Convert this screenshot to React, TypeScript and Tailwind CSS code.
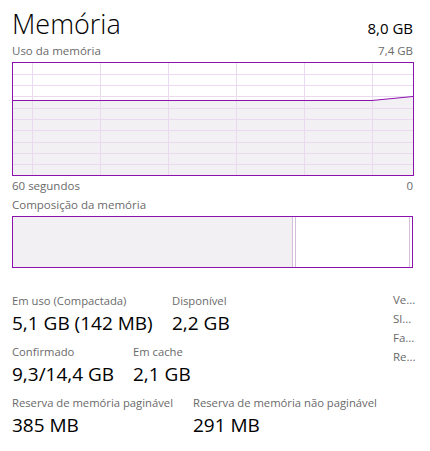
import React from 'react';

const font = { fontFamily: '"Open Sans", "Noto Sans", sans-serif' };

const vLines = [20, 88, 156, 224, 292, 360];
const hLines = [12, 23, 34, 46, 57, 68, 80, 91, 102];

const Grafico: React.FC = () => (
    <svg width="402" height="114" viewBox="0 0 402 114" className="block">
        <rect x="0" y="0" width="402" height="114" fill="#ffffff" />
        <polygon points="0,38.5 360,38.5 401,34.5 401,114 0,114" fill="#f3f0f4" />
        {vLines.map((x) => (
            <line key={'v' + x} x1={x + 0.5} y1="0" x2={x + 0.5} y2="114" stroke="#ead9ef" strokeWidth="1" />
        ))}
        {hLines.map((y) => (
            <line key={'h' + y} x1="0" y1={y + 0.5} x2="402" y2={y + 0.5} stroke="#ead9ef" strokeWidth="1" />
        ))}
        <polyline points="0,38.5 360,38.5 401,34.5" fill="none" stroke="#8b12ae" strokeWidth="1" />
        <rect x="0.5" y="0.5" width="401" height="113" fill="none" stroke="#8b12ae" strokeWidth="1" />
    </svg>
);

interface Stat {
    label: string;
    value: string;
    w: string;
}

const linha1: Stat[] = [
    { label: 'Em uso (Compactada)', value: '5,1 GB (142 MB)', w: 'w-[160px]' },
    { label: 'Disponível', value: '2,2 GB', w: 'w-[100px]' },
];
const linha2: Stat[] = [
    { label: 'Confirmado', value: '9,3/14,4 GB', w: 'w-[121px]' },
    { label: 'Em cache', value: '2,1 GB', w: 'w-[100px]' },
];
const linha3: Stat[] = [
    { label: 'Reserva de memória paginável', value: '385 MB', w: 'w-[181px]' },
    { label: 'Reserva de memória não paginável', value: '291 MB', w: 'w-[200px]' },
];

const Linha: React.FC<{ itens: Stat[]; className?: string }> = ({ itens, className }) => (
    <div className={'flex ' + (className ?? '')}>
        {itens.map((s) => (
            <div key={s.label} className={s.w + ' shrink-0'}>
                <div className="text-[11.25px] leading-[16px] text-[#6a6a6a] whitespace-nowrap">{s.label}</div>
                <div className="text-[19px] leading-[25px] text-black whitespace-nowrap mt-[2px]">{s.value}</div>
            </div>
        ))}
    </div>
);

const App: React.FC = () => {
    return (
        <div className="w-[430px] h-[451px] bg-white pl-3 pr-[17px] overflow-hidden" style={font}>
            {/* Cabeçalho */}
            <div className="flex justify-between items-end pt-[5px]">
                <div className="text-[27px] leading-[37px] font-light text-black">Memória</div>
                <div className="text-[15px] leading-[20px] text-black mb-[4px]">8,0 GB</div>
            </div>
            <div className="flex justify-between text-[11.5px] leading-[16px] text-[#6a6a6a] mt-[1px]">
                <span>Uso da memória</span>
                <span>7,4 GB</span>
            </div>

            {/* Gráfico */}
            <div className="mt-[3px]">
                <Grafico />
            </div>
            <div className="flex justify-between text-[11.5px] leading-[16px] text-[#6a6a6a] mt-[2px]">
                <span>60 segundos</span>
                <span>0</span>
            </div>

            {/* Composição */}
            <div className="text-[11.5px] leading-[16px] text-[#6a6a6a] mt-[3px]">Composição da memória</div>
            <div className="mt-[3px] h-[52px] border border-[#8b12ae] flex">
                <div className="w-[280px] bg-[#f3f0f4] border-r border-[#d5bfdc]" />
                <div className="w-[2px] bg-white" />
                <div className="w-[1px] bg-[#d5bfdc]" />
                <div className="flex-1 bg-white" />
                <div className="w-[1px] bg-[#d5bfdc] mr-[2px]" />
            </div>

            {/* Estatísticas */}
            <div className="flex justify-between mt-[25px]">
                <div>
                    <Linha itens={linha1} />
                    <Linha itens={linha2} className="mt-[8px]" />
                    <Linha itens={linha3} className="mt-[8px]" />
                </div>
                <div className="text-[11.5px] leading-[19px] text-[#6a6a6a] w-[24px] -mt-[3px]">
                    <div>Ve...</div>
                    <div>Sl...</div>
                    <div>Fa...</div>
                    <div>Re...</div>
                </div>
            </div>
        </div>
    );
};

export default App;
